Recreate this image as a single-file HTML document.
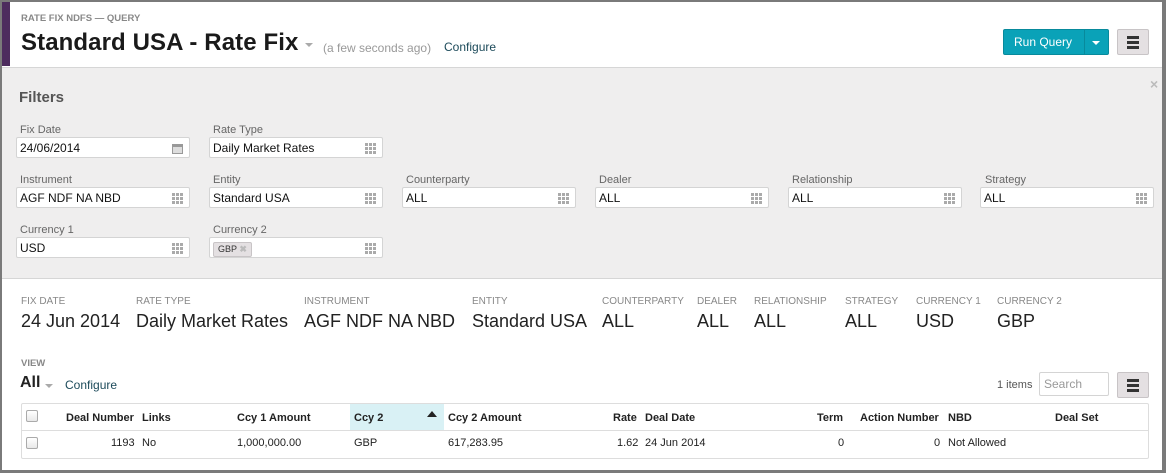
<!DOCTYPE html>
<html><head><meta charset="utf-8"><style>
*{box-sizing:border-box;margin:0;padding:0}
body{width:1166px;height:473px;overflow:hidden;font-family:"Liberation Sans",Arial,sans-serif;background:#fff;position:relative;color:#222}
.a{position:absolute;white-space:nowrap}
.frame{position:absolute;left:0;top:0;width:1166px;height:473px;border:2px solid #7a7a7a;border-right-width:4px;border-bottom-width:3px;pointer-events:none;z-index:10}
.lbl{font-size:11px;color:#666}
.inp{position:absolute;height:21px;width:174px;background:#fff;border:1px solid #d4d4d4;border-radius:2px;font-size:12px;padding:3px 3px;color:#111}
.inp svg{position:absolute;right:6px;top:5px}
.sl{font-size:10px;color:#888;text-transform:uppercase}
.sv{font-size:18px;color:#222}
.th{font-size:11px;font-weight:bold;color:#222}
.td{font-size:11px;color:#222}
.cb{position:absolute;width:12px;height:12px;border:1px solid #aaa;border-radius:2px;background:linear-gradient(#fff,#e8e8e8)}
</style></head><body>
<div class="frame"></div>
<div class="a" style="left:2px;top:2px;width:8px;height:64px;background:#4d2c5e"></div>
<div class="a" style="left:21px;top:13px;font-size:9.5px;font-weight:bold;color:#888">RATE FIX NDFS — QUERY</div>
<div class="a" style="left:21px;top:29px;font-size:24px;font-weight:bold;color:#1a1a1a;letter-spacing:0.1px">Standard USA - Rate Fix</div>
<div class="a" style="left:305px;top:43px;width:0;height:0;border-left:4px solid transparent;border-right:4px solid transparent;border-top:4px solid #aaa"></div>
<div class="a" style="left:323px;top:41px;font-size:12px;color:#999">(a few seconds ago)</div>
<div class="a" style="left:444px;top:40px;font-size:12px;color:#1c4a5a">Configure</div>
<div class="a" style="left:1003px;top:29px;width:106px;height:26px;background:#0aa2b8;border:1px solid #088a9c;border-radius:2px"></div>
<div class="a" style="left:1014px;top:35px;font-size:12px;color:#fff">Run Query</div>
<div class="a" style="left:1084px;top:30px;width:1px;height:24px;background:#088a9c"></div>
<div class="a" style="left:1092px;top:41px;width:0;height:0;border-left:4px solid transparent;border-right:4px solid transparent;border-top:4px solid #fff"></div>
<div class="a" style="left:1117px;top:29px;width:32px;height:26px;background:#e4e0e2;border:1px solid #c8c4c6;border-radius:2px"></div>
<div class="a" style="left:1127px;top:36px;width:12px;height:3px;background:#333;box-shadow:0 5px 0 #333,0 10px 0 #333"></div>
<div class="a" style="left:2px;top:67px;width:1160px;height:212px;background:#efeeee;border-top:1px solid #d6d6d6;border-bottom:1px solid #d6d6d6"></div>
<div class="a" style="left:1150px;top:76px;font-size:14px;font-weight:bold;color:#bbb">×</div>
<div class="a" style="left:19px;top:89px;font-size:15px;font-weight:bold;color:#555">Filters</div>

<div class="a lbl" style="left:20px;top:124px">Fix Date</div>
<div class="inp" style="left:16px;top:137px">24/06/2014<svg width="11" height="11"><rect x="0" y="1" width="11" height="10" fill="#999"/><rect x="1" y="4" width="9" height="6" fill="#ddd"/></svg></div>
<div class="a lbl" style="left:213px;top:124px">Rate Type</div>
<div class="inp" style="left:209px;top:137px">Daily Market Rates<svg width="11" height="11"><g fill="#aaa"><rect x="0" y="0" width="3" height="3"/><rect x="4" y="0" width="3" height="3"/><rect x="8" y="0" width="3" height="3"/><rect x="0" y="4" width="3" height="3"/><rect x="4" y="4" width="3" height="3"/><rect x="8" y="4" width="3" height="3"/><rect x="0" y="8" width="3" height="3"/><rect x="4" y="8" width="3" height="3"/><rect x="8" y="8" width="3" height="3"/></g></svg></div>

<div class="a lbl" style="left:20px;top:174px">Instrument</div>
<div class="inp" style="left:16px;top:187px">AGF NDF NA NBD<svg width="11" height="11"><use href="#g"/></svg></div>
<div class="a lbl" style="left:213px;top:174px">Entity</div>
<div class="inp" style="left:209px;top:187px">Standard USA<svg width="11" height="11"><use href="#g"/></svg></div>
<div class="a lbl" style="left:406px;top:174px">Counterparty</div>
<div class="inp" style="left:402px;top:187px">ALL<svg width="11" height="11"><use href="#g"/></svg></div>
<div class="a lbl" style="left:599px;top:174px">Dealer</div>
<div class="inp" style="left:595px;top:187px">ALL<svg width="11" height="11"><use href="#g"/></svg></div>
<div class="a lbl" style="left:792px;top:174px">Relationship</div>
<div class="inp" style="left:788px;top:187px">ALL<svg width="11" height="11"><use href="#g"/></svg></div>
<div class="a lbl" style="left:985px;top:174px">Strategy</div>
<div class="inp" style="left:980px;top:187px">ALL<svg width="11" height="11"><use href="#g"/></svg></div>

<div class="a lbl" style="left:20px;top:224px">Currency 1</div>
<div class="inp" style="left:16px;top:237px">USD<svg width="11" height="11"><use href="#g"/></svg></div>
<div class="a lbl" style="left:213px;top:224px">Currency 2</div>
<div class="inp" style="left:209px;top:237px"><span style="display:inline-block;background:#e4e0e2;border:1px solid #c8c4c6;border-radius:2px;font-size:9px;padding:1px 4px;margin-top:-2px;color:#333">GBP <b style="color:#bbb">✖</b></span><svg width="11" height="11" style="top:5px"><defs><g id="g" fill="#aaa"><rect x="0" y="0" width="3" height="3"/><rect x="4" y="0" width="3" height="3"/><rect x="8" y="0" width="3" height="3"/><rect x="0" y="4" width="3" height="3"/><rect x="4" y="4" width="3" height="3"/><rect x="8" y="4" width="3" height="3"/><rect x="0" y="8" width="3" height="3"/><rect x="4" y="8" width="3" height="3"/><rect x="8" y="8" width="3" height="3"/></g></defs><use href="#g"/></svg></div>

<div class="a sl" style="left:21px;top:296px">Fix Date</div><div class="a sv" style="left:21px;top:311px">24 Jun 2014</div>
<div class="a sl" style="left:136px;top:296px">Rate Type</div><div class="a sv" style="left:136px;top:311px">Daily Market Rates</div>
<div class="a sl" style="left:304px;top:296px">Instrument</div><div class="a sv" style="left:304px;top:311px">AGF NDF NA NBD</div>
<div class="a sl" style="left:472px;top:296px">Entity</div><div class="a sv" style="left:472px;top:311px">Standard USA</div>
<div class="a sl" style="left:602px;top:296px">Counterparty</div><div class="a sv" style="left:602px;top:311px">ALL</div>
<div class="a sl" style="left:697px;top:296px">Dealer</div><div class="a sv" style="left:697px;top:311px">ALL</div>
<div class="a sl" style="left:754px;top:296px">Relationship</div><div class="a sv" style="left:754px;top:311px">ALL</div>
<div class="a sl" style="left:845px;top:296px">Strategy</div><div class="a sv" style="left:845px;top:311px">ALL</div>
<div class="a sl" style="left:916px;top:296px">Currency 1</div><div class="a sv" style="left:916px;top:311px">USD</div>
<div class="a sl" style="left:997px;top:296px">Currency 2</div><div class="a sv" style="left:997px;top:311px">GBP</div>

<div class="a" style="left:21px;top:358px;font-size:9.5px;font-weight:bold;color:#888">VIEW</div>
<div class="a" style="left:20px;top:374px;font-size:16px;font-weight:bold;color:#222">All</div>
<div class="a" style="left:45px;top:384px;width:0;height:0;border-left:4px solid transparent;border-right:4px solid transparent;border-top:4px solid #aaa"></div>
<div class="a" style="left:65px;top:378px;font-size:12px;color:#1c4a5a">Configure</div>
<div class="a" style="left:997px;top:379px;font-size:11px;color:#555">1 items</div>
<div class="a" style="left:1039px;top:372px;width:70px;height:24px;border:1px solid #d4d4d4;border-radius:2px;font-size:12px;color:#999;padding:4px 4px">Search</div>
<div class="a" style="left:1117px;top:372px;width:32px;height:26px;background:#e4e0e2;border:1px solid #c8c4c6;border-radius:2px"></div>
<div class="a" style="left:1127px;top:379px;width:12px;height:3px;background:#333;box-shadow:0 5px 0 #333,0 10px 0 #333"></div>

<div class="a" style="left:21px;top:403px;width:1128px;height:56px;border:1px solid #ddd;border-radius:2px"></div>
<div class="a" style="left:22px;top:430px;width:1126px;height:1px;background:#ddd"></div>
<div class="a" style="left:350px;top:404px;width:94px;height:26px;background:#d9f1f5"></div>
<div class="a" style="left:427px;top:411px;width:0;height:0;border-left:5px solid transparent;border-right:5px solid transparent;border-bottom:6px solid #222"></div>
<div class="cb" style="left:26px;top:410px"></div>
<div class="cb" style="left:26px;top:437px"></div>
<div class="a th" style="left:66px;top:412px">Deal Number</div>
<div class="a th" style="left:142px;top:412px">Links</div>
<div class="a th" style="left:237px;top:412px">Ccy 1 Amount</div>
<div class="a th" style="left:354px;top:412px">Ccy 2</div>
<div class="a th" style="left:448px;top:412px">Ccy 2 Amount</div>
<div class="a th" style="left:613px;top:412px">Rate</div>
<div class="a th" style="left:645px;top:412px">Deal Date</div>
<div class="a th" style="left:817px;top:412px">Term</div>
<div class="a th" style="left:860px;top:412px">Action Number</div>
<div class="a th" style="left:948px;top:412px">NBD</div>
<div class="a th" style="left:1055px;top:412px">Deal Set</div>
<div class="a td" style="left:111px;top:437px">1193</div>
<div class="a td" style="left:142px;top:437px">No</div>
<div class="a td" style="left:237px;top:437px">1,000,000.00</div>
<div class="a td" style="left:354px;top:437px">GBP</div>
<div class="a td" style="left:448px;top:437px">617,283.95</div>
<div class="a td" style="left:617px;top:437px">1.62</div>
<div class="a td" style="left:645px;top:437px">24 Jun 2014</div>
<div class="a td" style="left:838px;top:437px">0</div>
<div class="a td" style="left:934px;top:437px">0</div>
<div class="a td" style="left:948px;top:437px">Not Allowed</div>
</body></html>
